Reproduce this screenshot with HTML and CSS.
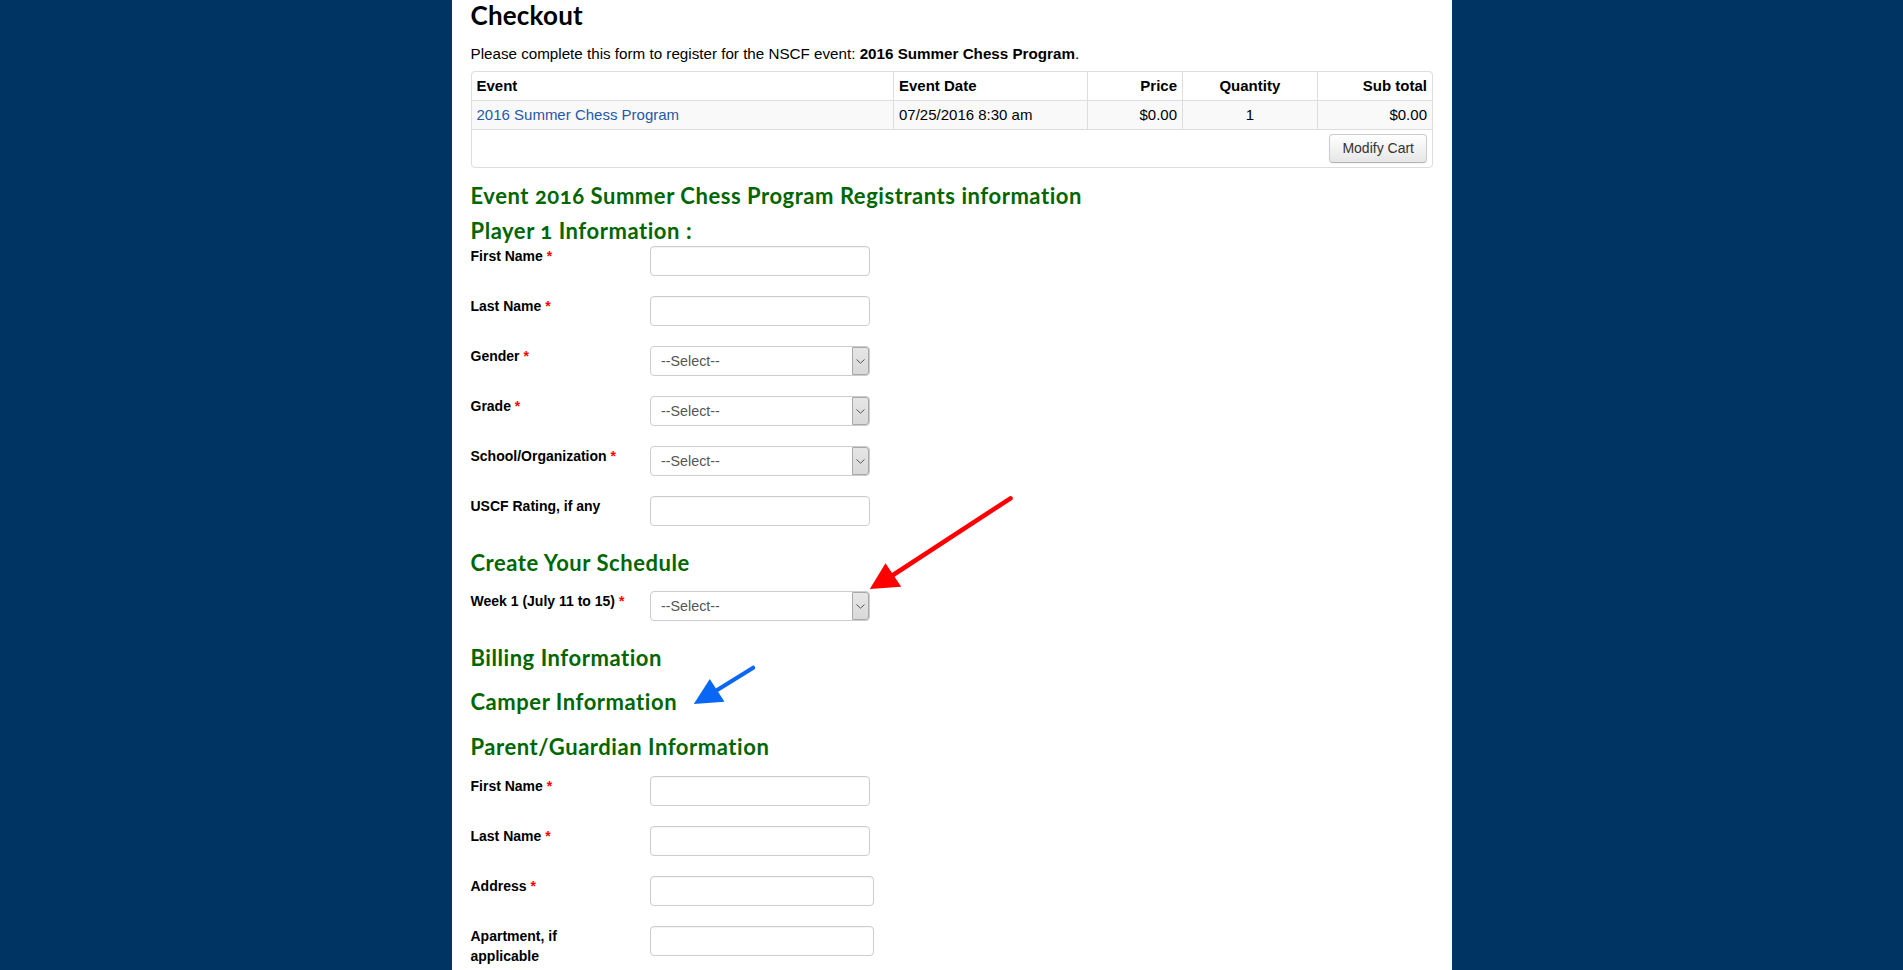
FILE: index.html
```html
<!DOCTYPE html>
<html lang="en">
<head>
<meta charset="utf-8">
<title>Checkout</title>
<link rel="stylesheet" href="styles.css">
</head>
<body>
<div class="page">
  <h1 class="page-title">Checkout</h1>
  <p class="intro">Please complete this form to register for the NSCF event: <strong>2016 Summer Chess Program</strong>.</p>

  <table class="cart">
    <colgroup>
      <col class="c-event">
      <col class="c-date">
      <col class="c-price">
      <col class="c-qty">
      <col class="c-sub">
    </colgroup>
    <thead>
      <tr>
        <th class="al-left">Event</th>
        <th class="al-left">Event Date</th>
        <th class="al-right">Price</th>
        <th class="al-center">Quantity</th>
        <th class="al-right">Sub total</th>
      </tr>
    </thead>
    <tbody>
      <tr class="striped">
        <td class="al-left"><a class="event-link" href="#">2016 Summer Chess Program</a></td>
        <td class="al-left">07/25/2016 8:30 am</td>
        <td class="al-right">$0.00</td>
        <td class="al-center">1</td>
        <td class="al-right">$0.00</td>
      </tr>
      <tr>
        <td class="cart-actions" colspan="5"><button class="btn" type="button">Modify Cart</button></td>
      </tr>
    </tbody>
  </table>

  <h2 class="heading heading-event">Event <span class="onum">2016</span> Summer Chess Program Registrants information</h2>
  <h3 class="heading heading-player">Player <span class="onum">1</span> Information :</h3>

  <div class="field">
    <label class="field-label">First Name <span class="req">*</span></label>
    <input class="input" type="text">
  </div>
  <div class="field">
    <label class="field-label">Last Name <span class="req">*</span></label>
    <input class="input" type="text">
  </div>
  <div class="field">
    <label class="field-label">Gender <span class="req">*</span></label>
    <span class="select-wrap"><select class="select"><option>--Select--</option></select><span class="select-arrow"><svg width="9" height="5" viewBox="0 0 9 5"><path d="M0.5 0.5 L4.5 4.2 L8.5 0.5" fill="none" stroke="#555" stroke-width="1"/></svg></span></span>
  </div>
  <div class="field">
    <label class="field-label">Grade <span class="req">*</span></label>
    <span class="select-wrap"><select class="select"><option>--Select--</option></select><span class="select-arrow"><svg width="9" height="5" viewBox="0 0 9 5"><path d="M0.5 0.5 L4.5 4.2 L8.5 0.5" fill="none" stroke="#555" stroke-width="1"/></svg></span></span>
  </div>
  <div class="field">
    <label class="field-label">School/Organization <span class="req">*</span></label>
    <span class="select-wrap"><select class="select"><option>--Select--</option></select><span class="select-arrow"><svg width="9" height="5" viewBox="0 0 9 5"><path d="M0.5 0.5 L4.5 4.2 L8.5 0.5" fill="none" stroke="#555" stroke-width="1"/></svg></span></span>
  </div>
  <div class="field">
    <label class="field-label">USCF Rating, if any</label>
    <input class="input" type="text">
  </div>

  <h3 class="heading heading-schedule">Create Your Schedule</h3>
  <div class="field">
    <label class="field-label">Week 1 (July 11 to 15) <span class="req">*</span></label>
    <span class="select-wrap"><select class="select"><option>--Select--</option></select><span class="select-arrow"><svg width="9" height="5" viewBox="0 0 9 5"><path d="M0.5 0.5 L4.5 4.2 L8.5 0.5" fill="none" stroke="#555" stroke-width="1"/></svg></span></span>
  </div>

  <h3 class="heading heading-billing">Billing Information</h3>
  <h3 class="heading heading-camper">Camper Information</h3>
  <h3 class="heading heading-parent">Parent/Guardian Information</h3>

  <div class="field">
    <label class="field-label">First Name <span class="req">*</span></label>
    <input class="input" type="text">
  </div>
  <div class="field">
    <label class="field-label">Last Name <span class="req">*</span></label>
    <input class="input" type="text">
  </div>
  <div class="field">
    <label class="field-label">Address <span class="req">*</span></label>
    <input class="input input-wide" type="text">
  </div>
  <div class="field">
    <label class="field-label">Apartment, if applicable</label>
    <input class="input input-wide" type="text">
  </div>

  <svg class="annotations" width="1000" height="970" viewBox="0 0 1000 970" aria-hidden="true">
    <line x1="558.5" y1="498.3" x2="438" y2="577" stroke="#ff0000" stroke-width="4.5" stroke-linecap="round"/>
    <polygon points="417.8,589 433.5,563.3 449.2,586.7" fill="#ff0000"/>
    <line x1="301.2" y1="667.7" x2="262" y2="692" stroke="#0a66f5" stroke-width="4" stroke-linecap="round"/>
    <polygon points="241.8,704 257.8,679 272.5,701.7" fill="#0a66f5"/>
  </svg>
</div>
</body>
</html>
```

FILE: styles.css
```css
html, body {
  margin: 0;
  padding: 0;
}

body {
  background: #003462;
  font-family: "Liberation Sans", Arial, sans-serif;
  color: #000;
}

.page {
  position: relative;
  width: 962px;
  min-height: 100vh;
  margin: 0 auto;
  padding: 0 19px 20px;
  background: #fff;
  box-sizing: content-box;
}

.page-title {
  margin: 0;
  font-family: Lato, "Open Sans", sans-serif;
  font-weight: 700;
  font-size: 26px;
  line-height: 30px;
  letter-spacing: 0.2px;
  color: #000;
}

.intro {
  margin: 14px 0 7px;
  font-size: 15.2px;
  line-height: 20px;
}

.intro strong {
  font-weight: 700;
}

/* cart table */
.cart {
  width: 100%;
  table-layout: fixed;
  border-collapse: separate;
  border-spacing: 0;
  border: 1px solid #ddd;
  border-radius: 4px;
  font-size: 15px;
  line-height: 20px;
}

.c-event { width: 421.5px; }
.c-date { width: 194px; }
.c-price { width: 95px; }
.c-qty { width: 134.7px; }
.c-sub { width: 115.3px; }

.cart th,
.cart td {
  padding: 4px 5px;
  border-left: 1px solid #ddd;
  vertical-align: top;
  white-space: nowrap;
}

.cart th:first-child,
.cart td:first-child {
  border-left: 0;
}

.cart tbody td {
  border-top: 1px solid #ddd;
}

.cart th {
  font-weight: 700;
}

.striped td {
  background: #f9f9f9;
}

.al-left { text-align: left; }
.al-right { text-align: right; }
.al-center { text-align: center; }

.event-link {
  color: #2458a8;
  text-decoration: none;
}

.cart-actions {
  text-align: right;
}

.btn {
  display: inline-block;
  height: 29px;
  padding: 0 12px;
  font-family: "Liberation Sans", Arial, sans-serif;
  font-size: 14px;
  line-height: 27px;
  color: #333;
  background: linear-gradient(#ffffff, #e6e6e6);
  border: 1px solid #cccccc;
  border-bottom-color: #b3b3b3;
  border-radius: 4px;
  box-shadow: inset 0 1px 0 rgba(255,255,255,0.2), 0 1px 2px rgba(0,0,0,0.05);
  vertical-align: top;
}

/* headings */
.heading {
  margin: 0;
  font-family: Lato, "Open Sans", sans-serif;
  font-weight: 700;
  font-size: 22px;
  line-height: 26px;
  letter-spacing: 0.55px;
  color: #006600;
}

.onum {
  font-variant-numeric: oldstyle-nums;
}

.heading-event { margin-top: 14.5px; }
.heading-player { margin-top: 9px; margin-bottom: 2.5px; }
.heading-schedule { margin-top: 24px; margin-bottom: 15px; }
.heading-billing { margin-top: 23.5px; }
.heading-camper { margin-top: 18.7px; }
.heading-parent { margin-top: 19.3px; margin-bottom: 15.5px; }

/* form rows */
.field {
  display: flex;
  align-items: flex-start;
  margin-bottom: 20px;
}

.field-label {
  width: 156px;
  margin-right: 23.5px;
  font-size: 14px;
  line-height: 20px;
  font-weight: 700;
}

.req {
  color: #ff0000;
}

.input {
  width: 220px;
  height: 30px;
  box-sizing: border-box;
  padding: 4px 6px;
  margin: 0;
  border: 1px solid #cccccc;
  border-radius: 4px;
  background: #fff;
  font-family: "Liberation Sans", Arial, sans-serif;
  font-size: 14px;
  box-shadow: inset 0 1px 1px rgba(0,0,0,0.04);
}

.input-wide {
  width: 224px;
}

.select-wrap {
  position: relative;
  display: inline-block;
  width: 220px;
  height: 30px;
}

.select {
  -webkit-appearance: none;
  appearance: none;
  width: 220px;
  height: 30px;
  box-sizing: border-box;
  margin: 0;
  padding: 0 20px 0 10px;
  border: 1px solid #cccccc;
  border-radius: 4px;
  background: #fff;
  font-family: "Liberation Sans", Arial, sans-serif;
  font-size: 14.3px;
  color: #555;
}

.select-arrow {
  position: absolute;
  top: 1px;
  right: 1px;
  bottom: 1px;
  width: 15px;
  display: flex;
  align-items: center;
  justify-content: center;
  background: linear-gradient(#e6e6e6, #d9d9d9);
  border: 1px solid #a9a9a9;
  border-radius: 0 3px 3px 0;
  pointer-events: none;
}

.annotations {
  position: absolute;
  top: 0;
  left: 0;
  pointer-events: none;
}
```
